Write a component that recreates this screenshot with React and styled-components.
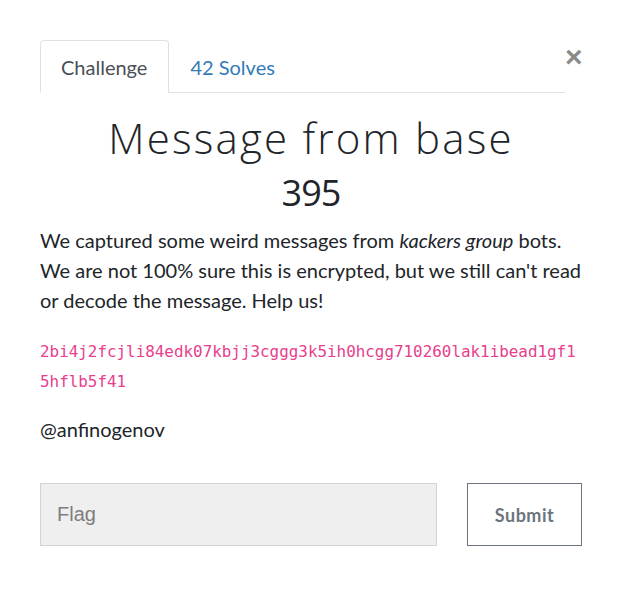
import React, { useState } from "react";
import styled, { createGlobalStyle } from "styled-components";

const GlobalStyle = createGlobalStyle`
  body {
    margin: 0;
    background: #fff;
    font-family: "Lato", "Liberation Sans", sans-serif;
    color: #212529;
  }
`;

const Modal = styled.div`
  width: 542px;
  padding: 40px 0 0 40px;
`;

const Header = styled.div`
  display: flex;
  align-items: flex-start;
`;

const Tabs = styled.ul`
  flex: 1;
  display: flex;
  list-style: none;
  margin: 0;
  padding: 0;
  border-bottom: 1px solid #dee2e6;
`;

const Tab = styled.li`
  margin-bottom: -1px;
  padding: 0 21px 0 20px;
  height: 51px;
  display: flex;
  align-items: center;
  font-size: 20px;
  border: 1px solid ${(p) => (p.$active ? "#dee2e6" : "transparent")};
  border-bottom-color: ${(p) => (p.$active ? "#fff" : "transparent")};
  border-radius: 4px 4px 0 0;
  color: ${(p) => (p.$active ? "#495057" : "#337ab7")};
  background: ${(p) => (p.$active ? "#fff" : "transparent")};
  cursor: pointer;
`;

const Close = styled.button`
  width: 17px;
  border: 0;
  background: none;
  padding: 0;
  margin-top: 2px;
  font-family: "Liberation Sans", sans-serif;
  font-size: 30px;
  font-weight: 700;
  line-height: 30px;
  color: #8a8a8a;
  cursor: pointer;
`;

const Title = styled.h2`
  margin: 20px 0 0;
  text-align: center;
  font-family: "Open Sans", sans-serif;
  font-weight: 300;
  font-size: 42px;
  letter-spacing: 2.2px;
  line-height: 50px;
  color: #212529;
`;

const Value = styled.h3`
  margin: 10px 0 0;
  text-align: center;
  font-family: "Open Sans", sans-serif;
  font-weight: 400;
  font-size: 36px;
  letter-spacing: -1px;
  line-height: 40px;
`;

const Description = styled.p`
  margin: 12px 0 0;
  font-size: 20px;
  line-height: 30px;
  color: #212529;
`;

const Code = styled.p`
  margin: 22px 0 0;
  word-break: break-all;
  font-family: "DejaVu Sans Mono", monospace;
  font-size: 15.9px;
  line-height: 30px;
  color: #e83e8c;
`;

const Author = styled.p`
  margin: 17px 0 0;
  font-size: 20px;
  line-height: 30px;
`;

const SubmitRow = styled.form`
  display: flex;
  gap: 30px;
  margin-top: 39px;
`;

const FlagInput = styled.input`
  width: 397px;
  height: 63px;
  box-sizing: border-box;
  padding: 0 16px;
  border: 1px solid #ced4da;
  background: #efefef;
  font-family: "Liberation Sans", sans-serif;
  font-size: 20px;
  color: #495057;
  &::placeholder {
    color: #7d7d7d;
  }
`;

const SubmitButton = styled.button`
  width: 115px;
  height: 63px;
  border: 1px solid #6c757d;
  background: #fff;
  color: #6c757d;
  font-family: "Lato", sans-serif;
  font-weight: 700;
  font-size: 18px;
  letter-spacing: 0.5px;
  cursor: pointer;
`;

export default function App() {
  const [flag, setFlag] = useState("");
  return (
    <>
      <GlobalStyle />
      <Modal>
        <Header>
          <Tabs>
            <Tab $active>Challenge</Tab>
            <Tab>42 Solves</Tab>
          </Tabs>
          <Close aria-label="Close">×</Close>
        </Header>
        <Title>Message from base</Title>
        <Value>395</Value>
        <Description>
          We captured some weird messages from <em>kackers group</em> bots. We
          are not 100% sure this is encrypted, but we still can't read or
          decode the message. Help us!
        </Description>
        <Code>2bi4j2fcjli84edk07kbjj3cggg3k5ih0hcgg710260lak1ibead1gf15hflb5f41</Code>
        <Author>@anfinogenov</Author>
        <SubmitRow onSubmit={(e) => e.preventDefault()}>
          <FlagInput
            placeholder="Flag"
            value={flag}
            onChange={(e) => setFlag(e.target.value)}
          />
          <SubmitButton type="submit">Submit</SubmitButton>
        </SubmitRow>
      </Modal>
    </>
  );
}
